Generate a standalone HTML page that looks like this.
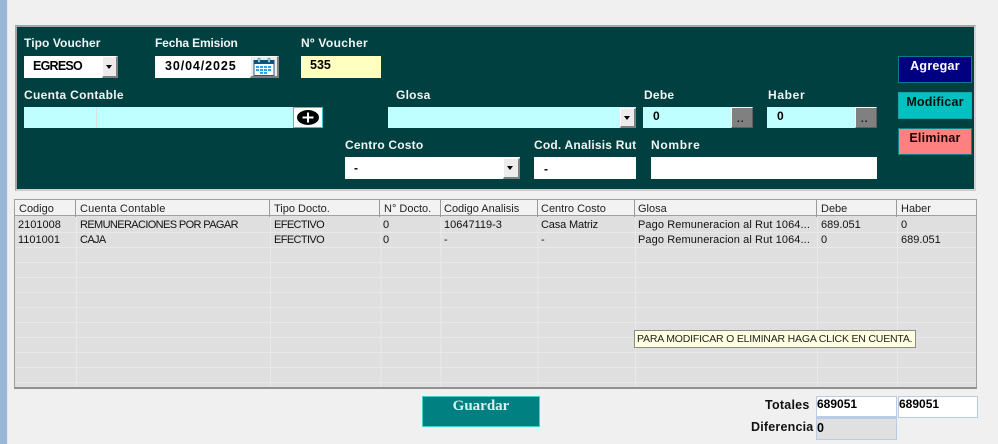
<!DOCTYPE html>
<html><head><meta charset="utf-8">
<style>
html,body{margin:0;padding:0;width:998px;height:444px;overflow:hidden;background:#f0f0f0;font-family:"Liberation Sans",sans-serif;}
.a{position:absolute;box-sizing:border-box;white-space:nowrap;}
.l{color:#f0f4f4;font-weight:bold;font-size:12px;line-height:14px;letter-spacing:.25px;}
.v{font-weight:bold;font-size:12px;line-height:14px;color:#000;}
.btn{background:#ececec;border:1px solid;border-color:#fff #707070 #707070 #fff;}
.arr{position:absolute;width:0;height:0;border-left:3.5px solid transparent;border-right:3.5px solid transparent;border-top:4px solid #000;}
.g{background:#808080;border:1px solid;border-color:#fff #606060 #606060 #fff;}
.g span{position:absolute;left:5px;top:7px;font-size:10px;line-height:10px;font-weight:bold;color:#111;letter-spacing:1px;}
.h{font-size:11px;line-height:14px;color:#222;top:202px;}
.c{font-size:11px;line-height:14px;color:#111;}
.u{letter-spacing:-.62px;}
.hs{top:200px;width:1px;height:17px;background:#9a9a9a;}
</style></head>
<body>
<div class="a" style="left:0;top:0;width:7px;height:444px;background:#9ab6d6"></div>
<div class="a" style="left:7px;top:0;width:1px;height:444px;background:#dfe8f2"></div>

<div class="a" style="left:15px;top:25px;width:961px;height:166px;background:#004040;border:2px solid #a6a6a6;border-right-color:#d4d4d4;border-bottom-color:#cfcfcf"></div>

<div class="a l" style="left:24px;top:36px;letter-spacing:.08px">Tipo Voucher</div>
<div class="a" style="left:24px;top:56px;width:94px;height:22px;background:#fff"></div>
<div class="a v" style="left:33px;top:59px;font-size:12.5px;letter-spacing:-.75px">EGRESO</div>
<div class="a btn" style="left:102px;top:56px;width:16px;height:22px;border-right:2px solid #808080;border-bottom:2px solid #808080"><div class="arr" style="left:3px;top:8px"></div></div>

<div class="a l" style="left:155px;top:36px;letter-spacing:-.15px">Fecha Emision</div>
<div class="a" style="left:155px;top:56px;width:95px;height:22px;background:#fff"></div>
<div class="a v" style="left:165px;top:59px;font-size:12.5px;letter-spacing:.9px">30/04/2025</div>
<div class="a btn" style="left:250px;top:56px;width:29px;height:22px;border-right:2px solid #808080;border-bottom:2px solid #808080"></div>
<svg class="a" style="left:253px;top:58px" width="22" height="18" viewBox="0 0 22 18">
<rect x="1" y="2.5" width="20" height="15" fill="#fff" stroke="#1b5c8c"/>
<rect x="1" y="2" width="20" height="4" fill="#12507e"/>
<rect x="5" y="0.5" width="2" height="4" fill="#d8e4ee" stroke="#12507e" stroke-width=".5"/>
<rect x="15" y="0.5" width="2" height="4" fill="#d8e4ee" stroke="#12507e" stroke-width=".5"/>
<g fill="#2aa6df"><rect x="3" y="8" width="3" height="2"/><rect x="7" y="8" width="3" height="2"/><rect x="11" y="8" width="3" height="2"/><rect x="15" y="8" width="3" height="2"/><rect x="3" y="11" width="3" height="2"/><rect x="7" y="11" width="3" height="2"/><rect x="11" y="11" width="3" height="2"/><rect x="15" y="11" width="3" height="2"/><rect x="7" y="14" width="3" height="2"/><rect x="11" y="14" width="3" height="2"/></g>
</svg>

<div class="a l" style="left:301px;top:36px;letter-spacing:.35px">Nº Voucher</div>
<div class="a" style="left:301px;top:56px;width:80px;height:22px;background:#ffffc0"></div>
<div class="a v" style="left:310px;top:58px;font-size:12.5px">535</div>

<div class="a l" style="left:24px;top:88px;letter-spacing:.3px">Cuenta Contable</div>
<div class="a" style="left:24px;top:107px;width:270px;height:21px;background:#c0ffff"></div>
<div class="a" style="left:96px;top:107px;width:1px;height:21px;background:#d8e0e0"></div>
<div class="a" style="left:293px;top:107px;width:30px;height:21px;background:#fff;border:1px solid #30c8c8"></div>
<svg class="a" style="left:296px;top:110px" width="24" height="15" viewBox="0 0 24 15">
<ellipse cx="12" cy="7.5" rx="11" ry="7.5" fill="#000"/>
<path d="M6.5 7.5H17.5M12 2.5V12.5" stroke="#fff" stroke-width="2" fill="none"/>
</svg>

<div class="a l" style="left:396px;top:88px">Glosa</div>
<div class="a" style="left:388px;top:107px;width:248px;height:21px;background:#c0ffff"></div>
<div class="a btn" style="left:620px;top:108px;width:16px;height:20px;border-right:2px solid #808080;border-bottom:2px solid #808080"><div class="arr" style="left:3px;top:7px"></div></div>

<div class="a l" style="left:644px;top:88px">Debe</div>
<div class="a" style="left:643px;top:107px;width:89px;height:21px;background:#c0ffff"></div>
<div class="a v" style="left:653px;top:109px">0</div>
<div class="a g" style="left:731px;top:107px;width:22px;height:21px"><span>..</span></div>

<div class="a l" style="left:768px;top:88px;letter-spacing:.65px">Haber</div>
<div class="a" style="left:767px;top:107px;width:89px;height:21px;background:#c0ffff"></div>
<div class="a v" style="left:777px;top:109px">0</div>
<div class="a g" style="left:855px;top:107px;width:22px;height:21px"><span>..</span></div>

<div class="a l" style="left:345px;top:138px;letter-spacing:.2px">Centro Costo</div>
<div class="a" style="left:345px;top:157px;width:175px;height:22px;background:#fff"></div>
<div class="a v" style="left:354px;top:161px">-</div>
<div class="a btn" style="left:503px;top:158px;width:17px;height:21px;border-right:2px solid #808080;border-bottom:2px solid #808080"><div class="arr" style="left:3px;top:7px"></div></div>

<div class="a l" style="left:534px;top:138px;letter-spacing:.2px">Cod. Analisis Rut</div>
<div class="a" style="left:534px;top:157px;width:102px;height:22px;background:#fff"></div>
<div class="a v" style="left:544px;top:162px">-</div>

<div class="a l" style="left:651px;top:138px;letter-spacing:.7px">Nombre</div>
<div class="a" style="left:651px;top:157px;width:226px;height:22px;background:#fff"></div>

<div class="a" style="left:898px;top:56px;width:74px;height:27px;background:#000080;border:1px solid #0a7a8a"></div>
<div class="a l" style="left:898px;top:59px;width:74px;text-align:center;color:#fff;font-size:12.5px">Agregar</div>
<div class="a" style="left:898px;top:92px;width:74px;height:27px;background:#00c0c0;border:1px solid #10a8a8"></div>
<div class="a l" style="left:898px;top:95px;width:74px;text-align:center;color:#001010;font-size:12.5px;letter-spacing:.2px">Modificar</div>
<div class="a" style="left:898px;top:128px;width:74px;height:27px;background:#ff8080;border:1px solid #108080"></div>
<div class="a l" style="left:898px;top:131px;width:74px;text-align:center;color:#1a0505;font-size:12.5px">Eliminar</div>

<!-- Grid -->
<div class="a" style="left:14px;top:199px;width:963px;height:190px;background:#dfdfdf;border:1px solid #a0a0a0;border-bottom:2px solid #909090"></div>
<div class="a" style="left:15px;top:200px;width:961px;height:16px;background:#f2f2f2;border-bottom:1px solid #a0a0a0"></div>
<svg class="a" style="left:16px;top:217px" width="960" height="170">
<g stroke="#e9e9e9" stroke-width="1">
<path d="M0 15.5H960M0 30.5H960M0 45.5H960M0 60.5H960M0 75.5H960M0 90.5H960M0 105.5H960M0 120.5H960M0 135.5H960M0 150.5H960M0 165.5H960"/>
<path d="M60.5 0V170M254.5 0V170M365 0V170M425 0V170M522 0V170M619.5 0V170M801.5 0V170M881.5 0V170"/>
</g>
</svg>
<div class="a hs" style="left:75px"></div>
<div class="a hs" style="left:269px"></div>
<div class="a hs" style="left:379px"></div>
<div class="a hs" style="left:440px"></div>
<div class="a hs" style="left:537px"></div>
<div class="a hs" style="left:634px"></div>
<div class="a hs" style="left:816px"></div>
<div class="a hs" style="left:896px"></div>

<div class="a h" style="left:19px">Codigo</div>
<div class="a h" style="left:80px;letter-spacing:.2px">Cuenta Contable</div>
<div class="a h" style="left:274px">Tipo Docto.</div>
<div class="a h" style="left:384px">N° Docto.</div>
<div class="a h" style="left:444px">Codigo Analisis</div>
<div class="a h" style="left:541px">Centro Costo</div>
<div class="a h" style="left:638px">Glosa</div>
<div class="a h" style="left:821px">Debe</div>
<div class="a h" style="left:901px">Haber</div>

<div class="a c" style="left:18px;top:218px">2101008</div>
<div class="a c u" style="left:80px;top:218px">REMUNERACIONES POR PAGAR</div>
<div class="a c u" style="left:274px;top:218px">EFECTIVO</div>
<div class="a c" style="left:383px;top:218px">0</div>
<div class="a c" style="left:444px;top:218px">10647119-3</div>
<div class="a c" style="left:541px;top:218px;letter-spacing:-.15px">Casa Matriz</div>
<div class="a c" style="left:638px;top:218px;letter-spacing:.1px">Pago Remuneracion al Rut 1064...</div>
<div class="a c" style="left:821px;top:218px">689.051</div>
<div class="a c" style="left:901px;top:218px">0</div>

<div class="a c" style="left:18px;top:233px">1101001</div>
<div class="a c u" style="left:80px;top:233px">CAJA</div>
<div class="a c u" style="left:274px;top:233px">EFECTIVO</div>
<div class="a c" style="left:383px;top:233px">0</div>
<div class="a c" style="left:444px;top:233px">-</div>
<div class="a c" style="left:541px;top:233px">-</div>
<div class="a c" style="left:638px;top:233px;letter-spacing:.1px">Pago Remuneracion al Rut 1064...</div>
<div class="a c" style="left:821px;top:233px">0</div>
<div class="a c" style="left:901px;top:233px">689.051</div>

<div class="a" style="left:634px;top:330px;width:282px;height:18px;background:#ffffe1;border:1px solid #8a8a8a;font-size:10.5px;line-height:16px;padding-left:2px;color:#222;letter-spacing:-.19px">PARA MODIFICAR O ELIMINAR HAGA CLICK EN CUENTA.</div>

<div class="a" style="left:422px;top:396px;width:118px;height:31px;background:#008080;border:1px solid #40d0d0"></div>
<div class="a" style="left:422px;top:398px;width:118px;text-align:center;font-family:'Liberation Serif',serif;font-weight:bold;font-size:15px;line-height:16px;color:#d8f0f0">Guardar</div>

<div class="a" style="left:765px;top:398px;font-size:12.5px;font-weight:bold;line-height:15px;color:#111;letter-spacing:.25px">Totales</div>
<div class="a" style="left:751px;top:420px;font-size:12.5px;font-weight:bold;line-height:15px;color:#111;letter-spacing:.2px">Diferencia</div>
<div class="a" style="left:816px;top:396px;width:81px;height:22px;background:#fff;border:1px solid #b8cce4;border-bottom-width:2px"></div>
<div class="a" style="left:898px;top:396px;width:80px;height:22px;background:#fff;border:1px solid #b8cce4"></div>
<div class="a" style="left:816px;top:418px;width:81px;height:22px;background:#e0e0e0;border:1px solid #b8cce4"></div>
<div class="a v" style="left:817px;top:397px;font-size:12px">689051</div>
<div class="a v" style="left:899px;top:397px;font-size:12px">689051</div>
<div class="a v" style="left:817px;top:421px;font-size:12.5px">0</div>
</body></html>
